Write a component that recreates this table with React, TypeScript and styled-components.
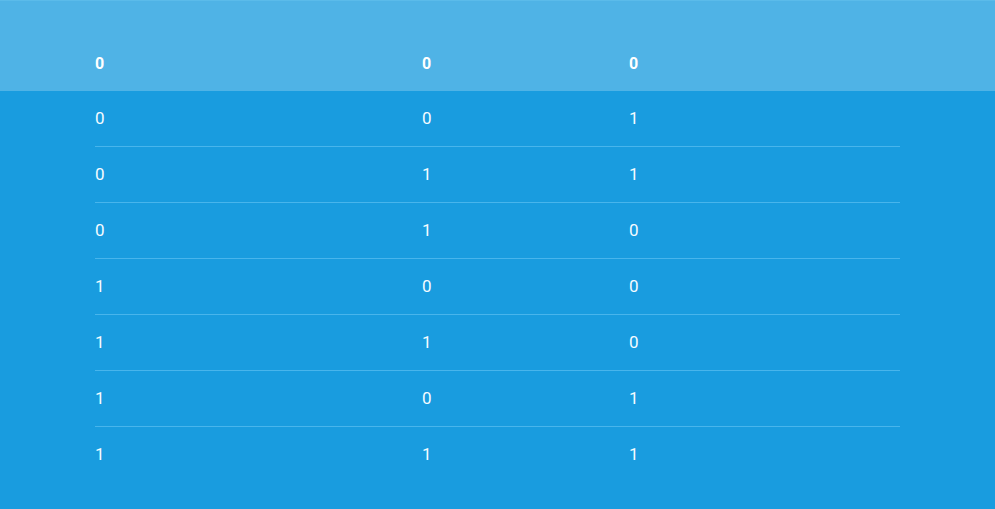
import styled, { createGlobalStyle } from "styled-components";

const Global = createGlobalStyle`
  html, body {
    margin: 0;
    padding: 0;
    background: #199cdf;
  }
  body {
    font-family: Roboto, "Liberation Sans", sans-serif;
  }
`;

const Page = styled.div`
  width: 995px;
  min-height: 509px;
  background: #199cdf;
  color: #f4fbff;
`;

const HeadBand = styled.div`
  background: #4fb3e6;
  border-top: 1px solid #5bbbea;
  height: 90px;
  display: flex;
  align-items: flex-end;
`;

const Grid = styled.div`
  display: grid;
  grid-template-columns: 327px 207px 271px;
  width: 805px;
  margin-left: 95px;
`;

const HeadRow = styled(Grid)`
  height: 90px;
  align-items: center;
  padding-top: 34px;
  box-sizing: border-box;
`;

const HeadCell = styled.div`
  font-size: 16px;
  font-weight: 700;
  line-height: 19px;
  letter-spacing: -0.3px;
  color: #ffffff;
`;

const Row = styled(Grid)<{ $last?: boolean }>`
  height: 56px;
  align-items: center;
  box-sizing: border-box;
  border-bottom: 1px solid ${(p) => (p.$last ? "transparent" : "#48b5ec")};
`;

const Cell = styled.div`
  font-size: 17px;
  line-height: 20px;
  margin-top: -1px;
`;

const rows = [
  [0, 0, 1],
  [0, 1, 1],
  [0, 1, 0],
  [1, 0, 0],
  [1, 1, 0],
  [1, 0, 1],
  [1, 1, 1],
];

export default function App() {
  return (
    <Page>
      <Global />
      <HeadBand>
        <HeadRow>
          <HeadCell>0</HeadCell>
          <HeadCell>0</HeadCell>
          <HeadCell>0</HeadCell>
        </HeadRow>
      </HeadBand>
      {rows.map((r, i) => (
        <Row key={i} $last={i === rows.length - 1}>
          {r.map((v, j) => (
            <Cell key={j}>{v}</Cell>
          ))}
        </Row>
      ))}
    </Page>
  );
}
